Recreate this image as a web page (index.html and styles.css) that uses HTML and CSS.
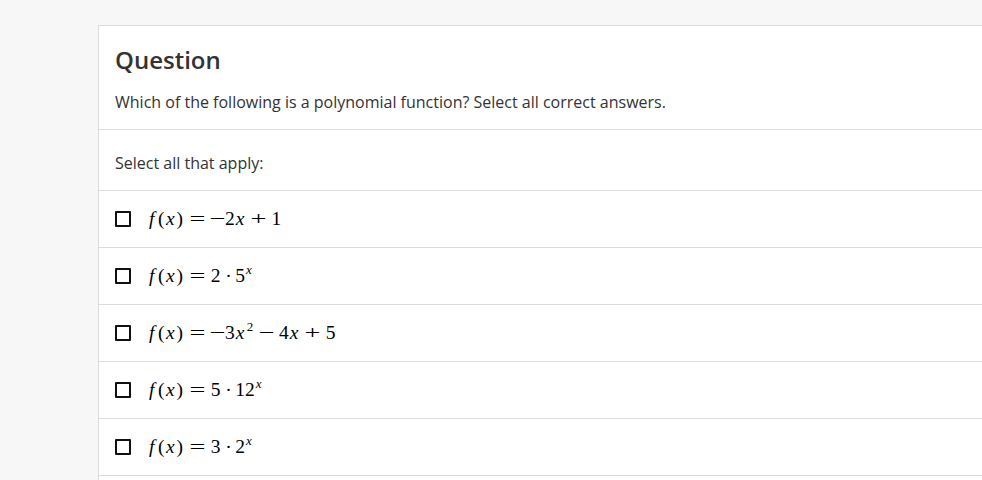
FILE: index.html
```html
<!DOCTYPE html>
<html>
<head>
<meta charset="utf-8">
<link rel="stylesheet" href="styles.css">
</head>
<body>
<div class="page">
  <div class="card">
    <div class="head">
      <h2 class="title">Question</h2>
      <p class="prompt">Which of the following is a polynomial function? Select all correct answers.</p>
    </div>
    <div class="instr">Select all that apply:</div>
    <ul class="options">
      <li class="opt"><span class="box"></span><span class="math"><i class="f">f</i><span class="p">(</span><i class="x">x</i><span class="p">)</span><span class="rel"><span>=</span></span><span class="bin un"><span>−</span></span>2<i class="x">x</i><span class="bin"><span>+</span></span>1</span></li>
      <li class="opt"><span class="box"></span><span class="math"><i class="f">f</i><span class="p">(</span><i class="x">x</i><span class="p">)</span><span class="rel"><span>=</span></span>2<span class="dot">·</span>5<sup><i>x</i></sup></span></li>
      <li class="opt"><span class="box"></span><span class="math"><i class="f">f</i><span class="p">(</span><i class="x">x</i><span class="p">)</span><span class="rel"><span>=</span></span><span class="bin un"><span>−</span></span>3<i class="x">x</i><sup>2</sup><span class="bin"><span>−</span></span>4<i class="x">x</i><span class="bin"><span>+</span></span>5</span></li>
      <li class="opt"><span class="box"></span><span class="math"><i class="f">f</i><span class="p">(</span><i class="x">x</i><span class="p">)</span><span class="rel"><span>=</span></span>5<span class="dot">·</span>12<sup><i>x</i></sup></span></li>
      <li class="opt"><span class="box"></span><span class="math"><i class="f">f</i><span class="p">(</span><i class="x">x</i><span class="p">)</span><span class="rel"><span>=</span></span>3<span class="dot">·</span>2<sup><i>x</i></sup></span></li>
    </ul>
  </div>
</div>
</body>
</html>
```
FILE: styles.css
```css
html, body {
  margin: 0;
  padding: 0;
  background: #f7f7f7;
  font-family: "Open Sans", "Liberation Sans", sans-serif;
  color: #333;
  overflow: hidden;
}
.page {
  padding: 25px 0 0 98px;
  height: 455px;
  overflow: hidden;
}
.card {
  background: #fff;
  border: 1px solid #dcdcdc;
  border-right: none;
  width: 900px;
  padding-bottom: 20px;
}
.head {
  padding: 18px 16px 15px 16px;
  border-bottom: 1px solid #dcdcdc;
}
.title {
  margin: 0;
  font-size: 24px;
  font-weight: 600;
  line-height: 32px;
  color: #333;
}
.prompt {
  margin: 14px 0 0 0;
  font-size: 16px;
  line-height: 24px;
  color: #333;
}
.instr {
  padding: 0 16px;
  height: 60px;
  line-height: 66px;
  font-size: 16px;
  border-bottom: 1px solid #dcdcdc;
}
.options {
  list-style: none;
  margin: 0;
  padding: 0;
}
.opt {
  display: flex;
  align-items: center;
  height: 56px;
  padding: 0 16px;
  border-bottom: 1px solid #dcdcdc;
}
.box {
  width: 12px;
  height: 12px;
  border: 2px solid #111;
  border-radius: 1px;
  margin-right: 17px;
  flex-shrink: 0;
}
.math {
  font-family: "Liberation Serif", serif;
  font-size: 19.5px;
  color: #000;
  white-space: nowrap;
  line-height: 24px;
}
.math i {
  font-family: "Liberation Serif", serif;
  font-style: italic;
}
.f {
  padding: 0 3px 0 1px;
}
.p {
  margin: 0 0.5px;
}
.x {
  padding: 0 1.5px 0 1px;
}
.rel, .bin {
  display: inline-block;
  width: 0.8em;
  text-align: center;
}
.rel {
  margin: 0 0.3em;
}
.bin {
  margin: 0 0.26em;
}
.bin.un {
  margin: 0;
  width: 0.72em;
}
.rel span, .bin span {
  display: inline-block;
  transform: scaleX(1.45);
}
.dot {
  display: inline-block;
  width: 0.278em;
  margin: 0 0.24em;
  text-align: center;
}
sup {
  font-size: 13px;
  position: relative;
  top: -8px;
  line-height: 0;
  vertical-align: baseline;
  margin-left: 1px;
}
```
